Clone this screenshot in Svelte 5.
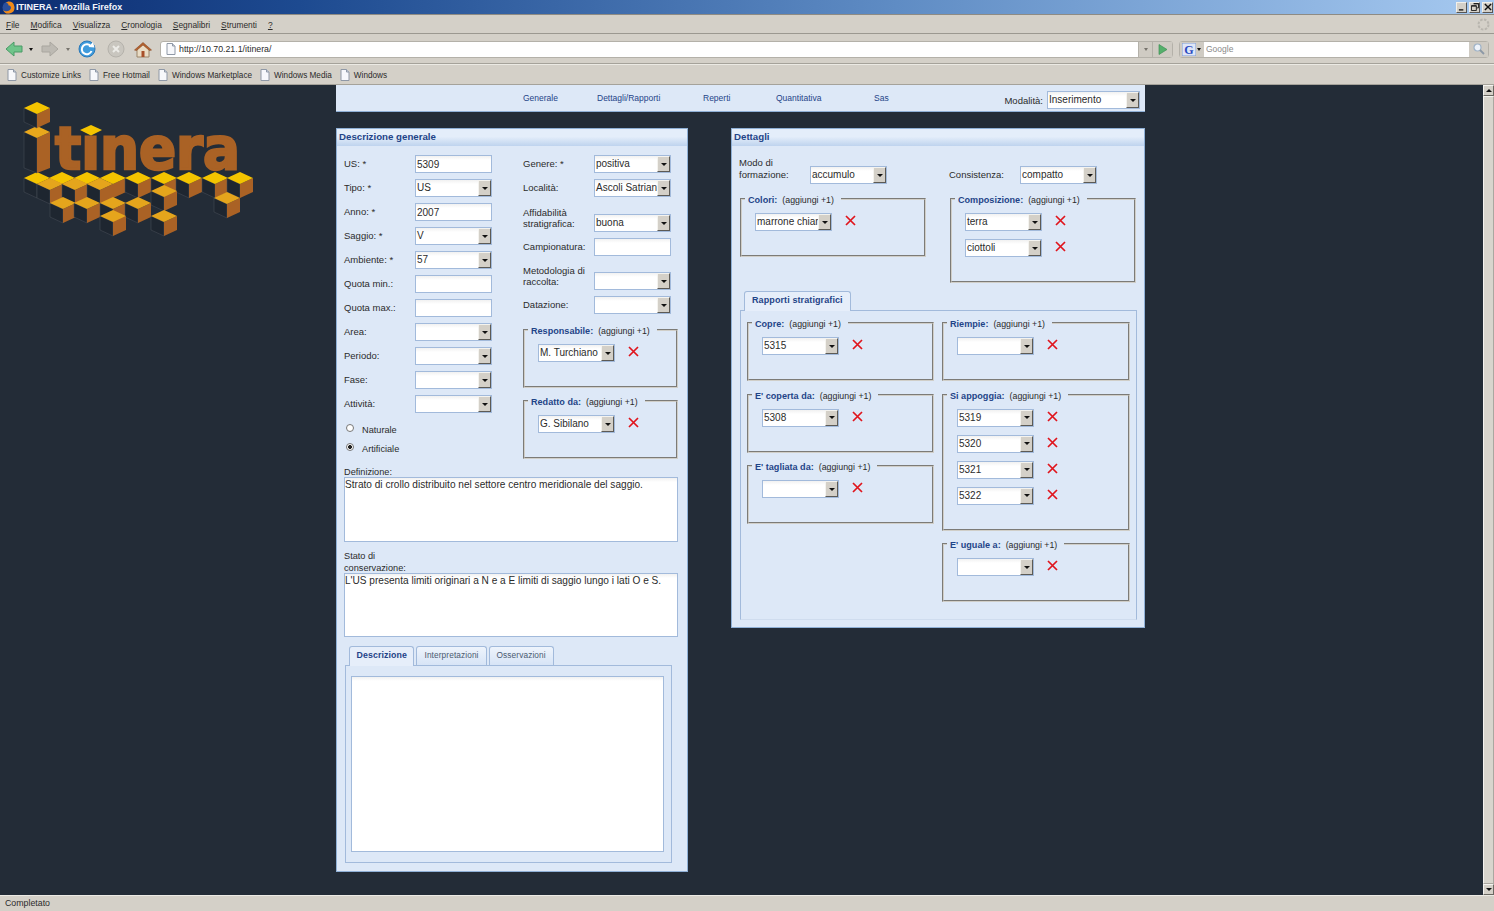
<script>
  const menu = [['F', 'ile'], ['M', 'odifica'], ['V', 'isualizza'], ['C', 'ronologia'], ['S', 'egnalibri'], ['S', 'trumenti'], ['?', '']];
  const bookmarks = ['Customize Links', 'Free Hotmail', 'Windows Marketplace', 'Windows Media', 'Windows'];
  const nav = ['Generale', 'Dettagli/Rapporti', 'Reperti', 'Quantitativa', 'Sas'];

  const leftFields = [
    { label: 'US: *', value: '5309', input: true },
    { label: 'Tipo: *', value: 'US' },
    { label: 'Anno: *', value: '2007', input: true },
    { label: 'Saggio: *', value: 'V' },
    { label: 'Ambiente: *', value: '57' },
    { label: 'Quota min.:', value: '', input: true },
    { label: 'Quota max.:', value: '', input: true },
    { label: 'Area:', value: '' },
    { label: 'Periodo:', value: '' },
    { label: 'Fase:', value: '' },
    { label: 'Attività:', value: '' }
  ];
  const rightFields = [
    { label: 'Genere: *', value: 'positiva' },
    { label: 'Località:', value: 'Ascoli Satriano' },
    { label: 'Affidabilità stratigrafica:', value: 'buona', two: true },
    { label: 'Campionatura:', value: '', input: true },
    { label: 'Metodologia di raccolta:', value: '', two: true },
    { label: 'Datazione:', value: '' }
  ];

  // top-centre of each cube of the logo, back to front
  const cubes = [
    [37, 172], [62, 172], [87, 172], [113, 172], [138, 172], [164, 172], [189, 172], [215, 172], [240, 172]
  ];
  const amberCubes = [[50, 178], [75, 178], [100, 178], [164, 185], [227, 192], [63, 197], [87, 197], [113, 197], [138, 197], [113, 210], [164, 210]];
</script>

{#snippet select(value, wide = false)}
  <div class="sel" class:wide>
    <span class="val">{value}</span>
    <span class="btn"><i></i></span>
  </div>
{/snippet}

{#snippet cross()}
  <svg class="cross" width="11" height="11" viewBox="0 0 11 11"><path d="M1 1 L10 10 M10 1 L1 10" stroke="#e0141c" stroke-width="1.7" fill="none"/></svg>
{/snippet}

{#snippet group(title, values, extra = '')}
  <fieldset class="group {extra}">
    <legend><b>{title}</b><span>(aggiungi +1)</span></legend>
    {#each values as v}
      <div class="pick">
        {@render select(v)}
        {@render cross()}
      </div>
    {/each}
  </fieldset>
{/snippet}

{#snippet page()}
  <svg width="10" height="12" viewBox="0 0 10 12"><path d="M1 .5 H6.5 L9 3 V11.5 H1 Z" fill="#f7f8fb" stroke="#8f98a6"/><path d="M6.5 .5 V3 H9" fill="#cfd6e2" stroke="#8f98a6"/></svg>
{/snippet}

<div class="window">
  <header class="title">
    <svg width="13" height="13" viewBox="0 0 13 13"><circle cx="6.5" cy="6.5" r="6" fill="#2a4f9c"/><path d="M6.5 .5 A6 6 0 1 1 1 9 C3 11 8 11 9 7 C9 5 7 4 6 4.500 C7 3 6 2 4 2 C5 1 6 .5 6.500 .5 Z" fill="#f08a18"/></svg>
    <span>ITINERA - Mozilla Firefox</span>
    <div class="winbtns">
      <span class="wb"><svg width="9" height="9" viewBox="0 0 9 9"><path d="M1 7 H6 V8.500 H1 Z" fill="#111"/></svg></span>
      <span class="wb"><svg width="9" height="9" viewBox="0 0 9 9"><path d="M3 .5 H8.500 V5.500 H6.500 M.5 3 H6 V8.500 H.5 Z M.5 3.500 H6 M3 1 H8.500" fill="none" stroke="#111"/></svg></span>
      <span class="wb"><svg width="9" height="9" viewBox="0 0 9 9"><path d="M1 1 L8 8 M8 1 L1 8" stroke="#111" stroke-width="1.600"/></svg></span>
    </div>
  </header>

  <div class="menubar">
    {#each menu as [first, rest]}
      <span><u>{first}</u>{rest}</span>
    {/each}
    <svg class="throbber" width="13" height="13" viewBox="0 0 13 13"><circle cx="6.500" cy="6.500" r="5" fill="none" stroke="#b9b6af" stroke-width="2" stroke-dasharray="2.500 1.400"/></svg>
  </div>

  <div class="toolbar">
    <svg class="tool back" width="18" height="16" viewBox="0 0 18 16"><path d="M1 8 L9 1 V5 H17 V11 H9 V15 Z" fill="#6fc48a" stroke="#4b9a66"/></svg>
    <i class="drop"></i>
    <svg class="tool fwd" width="18" height="16" viewBox="0 0 18 16"><path d="M17 8 L9 1 V5 H1 V11 H9 V15 Z" fill="#bdbab3" stroke="#a9a69f"/></svg>
    <i class="drop off"></i>
    <svg class="tool reload" width="19" height="18" viewBox="0 0 19 18"><circle cx="9" cy="9" r="8" fill="#3f9bdc" stroke="#2a78b8"/><path d="M13 6.500 A5 5 0 1 0 13.500 11" fill="none" stroke="#fff" stroke-width="2"/><path d="M10.500 7 L16.500 7.500 L15 2 Z" fill="#fff"/></svg>
    <svg class="tool stop" width="18" height="18" viewBox="0 0 18 18"><circle cx="9" cy="9" r="8" fill="#c9c6bf" stroke="#b5b2ab"/><path d="M6 6 L12 12 M12 6 L6 12" stroke="#ecebe7" stroke-width="2"/></svg>
    <svg class="tool home" width="18" height="17" viewBox="0 0 18 17"><path d="M3 8 V16 H15 V8 L9 3 Z" fill="#e9dcc5" stroke="#9b8468"/><path d="M.5 9 L9 1.500 L17.500 9 L15.500 9.500 L9 4 L2.500 9.500 Z" fill="#b4622f" stroke="#8b4a25" stroke-width=".6"/><path d="M7.500 10 H10.500 V16 H7.500 Z" fill="#a8502a"/></svg>
    <div class="url">
      {@render page()}
      <span class="addr">http://10.70.21.1/itinera/</span>
      <span class="urldrop"><i class="drop off"></i></span>
      <span class="go"><svg width="10" height="11" viewBox="0 0 10 11"><path d="M1 .5 L9 5.500 L1 10.500 Z" fill="#55b06b" stroke="#3f8f56" stroke-width=".7"/></svg></span>
    </div>
    <div class="search">
      <span class="engine">
        <svg width="14" height="13" viewBox="0 0 14 13"><rect width="14" height="13" fill="#dfe6f7" stroke="#7f9ad0"/><text x="7" y="11" text-anchor="middle" class="gee">G</text></svg>
        <i class="drop"></i>
      </span>
      <span class="q">Google</span>
      <span class="lens"><svg width="12" height="12" viewBox="0 0 12 12"><circle cx="4.500" cy="4.500" r="3.500" fill="#eef3fa" stroke="#9fb3c8" stroke-width="1.200"/><path d="M7 7 L11 11" stroke="#8c98a6" stroke-width="1.800"/></svg></span>
    </div>
  </div>

  <div class="bookmarks">
    {#each bookmarks as b}
      <span class="bm">{@render page()}{b}</span>
    {/each}
  </div>

  <div class="content">
    <main>
      <aside class="logo">
        <svg width="260" height="160" viewBox="0 90 260 160">
          <defs>
            <g id="cube">
              <path d="M-13 6 L0 12 V26 L-13 20 Z" fill="#1e2630" stroke="#4a515b" stroke-width=".5"/>
              <path d="M13 6 L0 12 V26 L13 20 Z" fill="#aa6225"/>
              <path d="M0 0 L13 6 L0 12 L-13 6 Z" fill="#f4c400"/>
            </g>
            <g id="amber">
              <path d="M-13 6 L0 12 V26 L-13 20 Z" fill="#1e2630" stroke="#4a515b" stroke-width=".5"/>
              <path d="M13 6 L0 12 V26 L13 20 Z" fill="#aa6225"/>
              <path d="M0 0 L13 6 L0 12 L-13 6 Z" fill="#e5a51c"/>
            </g>
          </defs>
          {#each cubes as [x, y]}
            <use href="#cube" {x} {y}/>
          {/each}
          {#each amberCubes as [x, y]}
            <use href="#amber" {x} {y}/>
          {/each}
          <path d="M24 132 L37 138 V173 L24 168 Z" fill="#1e2630" stroke="#4a515b" stroke-width=".5"/>
          <path d="M50 132 L37 138 V173 L50 168 Z" fill="#aa6225"/>
          <path d="M37 126 L50 132 L37 138 L24 132 Z" fill="#e9a81c"/>
          <use href="#cube" x="37" y="102"/>
          <text x="55" y="169" textLength="185" lengthAdjust="spacingAndGlyphs" class="word">tınera</text>
          <path d="M91 125 L102 130 L91 135.500 L80 130 Z" fill="#f4c400"/>
        </svg>
      </aside>

      <div class="app">
        <nav class="top">
          {#each nav as n}<a href="#top">{n}</a>{/each}
          <div class="mode"><span>Modalità:</span>{@render select('Inserimento', true)}</div>
        </nav>

        <div class="panels">
          <section class="panel left">
            <h2>Descrizione generale</h2>
            <div class="body">
              <div class="cols">
                <div class="col-a">
                  {#each leftFields as f}
                    <div class="field">
                      <label for={f.label}>{f.label}</label>
                      {#if f.input}
                        <input id={f.label} value={f.value} readonly />
                      {:else}
                        {@render select(f.value)}
                      {/if}
                    </div>
                  {/each}
                  <div class="radios">
                    <span class="radio"><i></i>Naturale</span>
                    <span class="radio"><i class="on"></i>Artificiale</span>
                  </div>
                </div>
                <div class="col-b">
                  {#each rightFields as f}
                    <div class="field" class:two={f.two}>
                      <label for={f.label}>{f.label}</label>
                      {#if f.input}
                        <input id={f.label} value={f.value} readonly />
                      {:else}
                        {@render select(f.value)}
                      {/if}
                    </div>
                  {/each}
                  {@render group('Responsabile:', ['M. Turchiano'])}
                  {@render group('Redatto da:', ['G. Sibilano'])}
                </div>
              </div>

              <label class="stack" for="def">Definizione:</label>
              <textarea id="def" readonly>Strato di crollo distribuito nel settore centro meridionale del saggio.</textarea>
              <label class="stack cons" for="cons">Stato di<br />conservazione:</label>
              <textarea id="cons" readonly>L'US presenta limiti originari a N e a E limiti di saggio lungo i lati O e S.</textarea>

              <div class="tabs">
                <span class="tab on">Descrizione</span>
                <span class="tab">Interpretazioni</span>
                <span class="tab">Osservazioni</span>
              </div>
              <div class="tabbody">
                <textarea class="big" readonly></textarea>
              </div>
            </div>
          </section>

          <section class="panel right">
            <h2>Dettagli</h2>
            <div class="body">
              <div class="headrow">
                <div class="field"><label for="modo">Modo di<br />formazione:</label>{@render select('accumulo')}</div>
                <div class="field"><label for="cons2">Consistenza:</label>{@render select('compatto')}</div>
              </div>
              <div class="pair top-pair">
                {@render group('Colori:', ['marrone chiaro'])}
                {@render group('Composizione:', ['terra', 'ciottoli'])}
              </div>
              <div class="tabs inner">
                <span class="tab on strong">Rapporti stratigrafici</span>
              </div>
              <div class="rapporti">
                <div class="rap-col">
                  {@render group('Copre:', ['5315'])}
                  {@render group("E' coperta da:", ['5308'])}
                  {@render group("E' tagliata da:", [''])}
                </div>
                <div class="rap-col">
                  {@render group('Riempie:', [''])}
                  {@render group('Si appoggia:', ['5319', '5320', '5321', '5322'])}
                  {@render group("E' uguale a:", [''])}
                </div>
              </div>
            </div>
          </section>
        </div>
      </div>
    </main>

    <div class="scrollbar">
      <span class="sb"><i class="up"></i></span>
      <span class="thumb"></span>
      <span class="sb"><i></i></span>
    </div>
  </div>

  <footer class="status">Completato</footer>
</div>

<style>
  :global(body) {
    margin: 0;
    background: #232c37;
    font-family: "Liberation Sans", Arial, sans-serif;
  }
  .window {
    height: 911px;
    width: 1494px;
    display: flex;
    flex-direction: column;
    overflow: hidden;
    font-size: 8.5px;
    color: #2b2b2b;
  }

  /* browser chrome */
  .title {
    height: 14px;
    flex: none;
    display: flex;
    align-items: center;
    gap: 1px;
    padding-left: 2px;
    background: linear-gradient(90deg, #0c2c70 0%, #1d4a90 20%, #5f8cc4 60%, #a6c9f0 100%);
    color: #f2f5fb;
    font-size: 9px;
    font-weight: bold;
  }
  .winbtns {
    margin-left: auto;
    display: flex;
    gap: 2px;
    padding-right: 1px;
  }
  .wb {
    width: 11px;
    height: 11px;
    background: #d4d0c8;
    border: 1px solid #f2f0ea;
    border-right-color: #555;
    border-bottom-color: #555;
    box-sizing: border-box;
    display: flex;
    align-items: center;
    justify-content: center;
  }
  .wb svg { width: 8px; height: 8px; }
  .menubar {
    height: 20px;
    flex: none;
    box-sizing: border-box;
    display: flex;
    align-items: center;
    gap: 11px;
    padding: 1px 0 0 6px;
    background: #d4d0c8;
    border-top: 1px solid #8e8b84;
    border-bottom: 1px solid #9b9890;
    font-size: 8.4px;
  }
  .throbber { margin-left: auto; margin-right: 4px; }
  .toolbar {
    height: 30px;
    flex: none;
    display: flex;
    align-items: center;
    background: #d4d0c8;
    border-bottom: 1px solid #a5a29a;
    padding: 1px 0 0 5px;
    box-sizing: border-box;
  }
  .tool { flex: none; }
  .drop {
    display: inline-block;
    width: 0;
    height: 0;
    border: 2.500px solid transparent;
    border-top: 3px solid #111;
    border-bottom: 0;
  }
  .drop.off { border-top-color: #77746d; }
  .toolbar > .drop { margin: 1px 8px 0 6px; }
  .toolbar > .drop.off { margin: 1px 8px 0 7px; }
  .stop { margin-left: 10px; }
  .home { margin-left: 9px; margin-right: 8px; }
  .url {
    width: 1013px;
    height: 17px;
    box-sizing: border-box;
    display: flex;
    align-items: center;
    background: #fff;
    border: 1px solid #b4b1a9;
    border-radius: 3px;
    padding-left: 5px;
    font-size: 8.8px;
  }
  .addr { margin-left: 3px; flex: 1; }
  .urldrop, .go {
    height: 100%;
    background: #cfcbc3;
    display: flex;
    align-items: center;
    justify-content: center;
    border-left: 1px solid #b4b1a9;
  }
  .urldrop { width: 13px; }
  .go { width: 19px; }
  .search {
    width: 310px;
    height: 17px;
    margin-left: 6px;
    box-sizing: border-box;
    display: flex;
    align-items: center;
    background: #fff;
    border: 1px solid #b4b1a9;
    border-radius: 3px;
  }
  .engine {
    width: 24px;
    height: 100%;
    background: #cfcbc3;
    display: flex;
    align-items: center;
    gap: 1px;
    padding-left: 2px;
    box-sizing: border-box;
  }
  .gee { font: bold 12px "Liberation Serif", serif; fill: #2a4ac0; }
  .q { flex: 1; color: #8a8a8a; padding-left: 2px; }
  .lens {
    width: 19px;
    height: 100%;
    background: #cfcbc3;
    display: flex;
    align-items: center;
    justify-content: center;
  }
  .bookmarks {
    height: 21px;
    flex: none;
    display: flex;
    align-items: center;
    gap: 8px;
    padding: 1px 0 0 7px;
    background: #d4d0c8;
    border-top: 1px solid #eceae4;
    border-bottom: 1px solid #a5a29a;
    box-sizing: border-box;
    font-size: 8.200px;
  }
  .bm { display: flex; align-items: center; gap: 4px; }

  .content {
    flex: 1;
    display: flex;
    min-height: 0;
  }
  main {
    flex: 1;
    display: flex;
    min-width: 0;
    background: #232c37;
  }
  .logo {
    width: 336px;
    flex: none;
  }
  .logo svg { display: block; margin-top: 5px; }
  .word {
    font: bold 58px "DejaVu Sans", sans-serif;
    fill: #aa6225;
    stroke: #aa6225;
    stroke-width: 2.500px;
  }

  .top {
    width: 809px;
    height: 27px;
    box-sizing: border-box;
    display: grid;
    grid-template-columns: 74px 106px 73px 98px 1fr;
    align-items: center;
    padding-left: 187px;
    padding-bottom: 1px;
    background: #dde8f7;
    border-bottom: 1px solid #8fb0d6;
    position: relative;
  }
  .top a {
    color: #1f4488;
    text-decoration: none;
  }
  .mode {
    position: absolute;
    right: 5px;
    top: 6px;
    display: flex;
    align-items: center;
    gap: 4px;
    font-size: 9.500px;
  }

  .panels {
    display: flex;
    align-items: flex-start;
    gap: 43px;
    margin-top: 16px;
  }
  .panel {
    background: #dde8f7;
    box-sizing: border-box;
    border: 1px solid #8fb0d6;
  }
  .panel.left { width: 352px; height: 744px; }
  .panel.right { width: 414px; height: 500px; }
  h2 {
    margin: 0;
    height: 17px;
    box-sizing: border-box;
    padding: 2px 2px 0;
    font-size: 9.700px;
    line-height: 11px;
    color: #1f4488;
    background: linear-gradient(#e4eefa, #e4eefa 45%, #bed3ee);
    font-weight: bold;
  }
  .left .body { padding: 9px 9px 0 7px; }
  .cols {
    display: grid;
    grid-template-columns: 148px 155px;
    column-gap: 31px;
  }
  .col-a, .col-b {
    display: flex;
    flex-direction: column;
    gap: 6px;
  }
  .field {
    display: flex;
    align-items: center;
    font-size: 9.500px;
  }
  .col-a .field label { width: 71px; flex: none; padding-bottom: 1px; }
  .col-b .field { min-height: 18px; }
  .col-b .field label { width: 71px; flex: none; line-height: 11px; padding-bottom: 1px; }
  .col-b .field.two { height: 29px; align-items: flex-end; }
  .col-b .field.two label { padding-bottom: 3px; }
  .col-b .field.two:nth-of-type(5) { height: 28px; }

  input, textarea {
    box-sizing: border-box;
    border: 1px solid #a2badb;
    background: linear-gradient(#f1f1f1, #fff 4px);
    font-family: inherit;
    color: #2b2b2b;
    outline: none;
  }
  input {
    width: 77px;
    height: 18px;
    font-size: 10px;
    padding: 0 1px;
    border-radius: 0;
  }
  textarea {
    display: block;
    resize: none;
    width: 334px;
    padding: 1px 0 0;
    font-size: 10.100px;
    line-height: 12px;
    overflow: hidden;
  }
  #def { height: 65px; }
  #cons { height: 64px; }
  .sel {
    width: 77px;
    height: 18px;
    flex: none;
    box-sizing: border-box;
    display: flex;
    border: 1px solid #a2badb;
    background: linear-gradient(#f1f1f1, #fff 4px);
    font-size: 10px;
    color: #2b2b2b;
  }
  .sel.wide { width: 93px; }
  .val {
    flex: 1;
    min-width: 0;
    padding-left: 1px;
    line-height: 16px;
    overflow: hidden;
    white-space: nowrap;
  }
  .btn {
    width: 13px;
    flex: none;
    background: #d4d0c8;
    border: 1px solid #f4f3ef;
    border-right-color: #5c5a55;
    border-bottom-color: #5c5a55;
    box-sizing: border-box;
    display: flex;
    align-items: center;
    justify-content: center;
  }
  .btn i {
    width: 0;
    height: 0;
    border: 3.500px solid transparent;
    border-top: 3.500px solid #111;
    border-bottom: 0;
  }
  .radios {
    display: flex;
    flex-direction: column;
    gap: 7px;
    margin-top: 4px;
    padding-left: 2px;
  }
  .radio {
    display: flex;
    align-items: flex-start;
    height: 12px;
    font-size: 9.200px;
    line-height: 14px;
  }
  .radio i {
    width: 8px;
    height: 8px;
    margin-right: 8px;
    box-sizing: border-box;
    border-radius: 50%;
    border: 1px solid #777;
    background: #fff;
    margin-top: 1px;
  }
  .radio i.on { background: radial-gradient(circle, #222 0 1.800px, #fff 2.200px); }

  fieldset.group {
    margin: 0;
    padding: 9px 13px 24px;
    min-inline-size: 0;
    border: 2px groove #d0cec8;
    box-sizing: border-box;
    display: flex;
    flex-direction: column;
    gap: 8px;
  }
  legend {
    margin-left: -10px;
    padding: 0 7px 0 3px;
    font-size: 8.800px;
    line-height: 10px;
    white-space: nowrap;
  }
  legend b, legend span { position: relative; top: 1px; }
  legend b { color: #1f4488; margin-right: 5px; font-size: 9.100px; }
  .pick {
    display: flex;
    align-items: flex-start;
    gap: 13px;
  }
  .cross { margin-top: 2px; flex: none; }
  .col-b fieldset.group { margin-top: 5px; }
  .col-b fieldset.group + fieldset.group { margin-top: 2px; }

  .stack {
    display: block;
    font-size: 9.200px;
    line-height: 11px;
    margin: 8px 0 -1px;
  }
  .stack.cons { margin: 8px 0 -1px; line-height: 12px; }
  .tabs {
    display: flex;
    gap: 2px;
    margin-top: 9px;
    padding-left: 5px;
    height: 19px;
  }
  .tab {
    box-sizing: border-box;
    padding: 0 7px;
    height: 19px;
    line-height: 17px;
    border: 1px solid #a2badb;
    border-bottom: 0;
    border-radius: 3px 3px 0 0;
    background: linear-gradient(#eef4fc, #d7e4f6);
    font-size: 8.300px;
    color: #4a5a70;
    letter-spacing: .1px;
  }
  .tab.on {
    background: #e6eefa;
    color: #1f4488;
    font-weight: bold;
    font-size: 8.800px;
    padding: 0 6.500px;
    height: 20px;
    position: relative;
    z-index: 1;
  }
  .tabbody {
    width: 327px;
    height: 198px;
    box-sizing: border-box;
    margin-left: 1px;
    padding: 10px 5px;
    border: 1px solid #a2badb;
    background: #dde8f7;
  }
  .big {
    width: 313px;
    height: 176px;
  }

  .right .body { padding: 13px 8px 0 8px; }
  .headrow {
    display: flex;
    height: 25px;
    margin-left: -1px;
    align-items: flex-end;
    gap: 62px;
  }
  .headrow .field { align-items: flex-end; line-height: 12px; }
  .headrow label { width: 71px; flex: none; padding-bottom: 3px; }
  .pair {
    display: grid;
    grid-template-columns: 186px 186px;
    column-gap: 24px;
    align-items: start;
    margin-top: 10px;
  }
  .tabs.inner { margin-top: 8px; padding-left: 4px; }
  .tab.on.strong { font-size: 9px; padding: 0 7px; }
  .rapporti {
    width: 397px;
    height: 310px;
    box-sizing: border-box;
    padding: 7px 6px 0;
    display: grid;
    grid-template-columns: 187px 188px;
    column-gap: 8px;
    border: 1px solid #a2badb;
    border-bottom-color: #cfdcee;
  }
  .rap-col {
    display: flex;
    flex-direction: column;
    gap: 8.500px;
  }

  .scrollbar {
    width: 11px;
    flex: none;
    display: flex;
    flex-direction: column;
    background: #ece9e0;
  }
  .sb {
    height: 11px;
    flex: none;
    background: #d4d0c8;
    border: 1px solid #f4f3ef;
    border-right-color: #6a6862;
    border-bottom-color: #6a6862;
    box-sizing: border-box;
    display: flex;
    align-items: center;
    justify-content: center;
  }
  .sb i {
    width: 0;
    height: 0;
    border: 3px solid transparent;
    border-top: 3px solid #111;
    border-bottom: 0;
  }
  .sb i.up {
    border-top: 0;
    border-bottom: 3px solid #111;
  }
  .thumb {
    flex: 1;
    background: #d8d5cd;
    border: 1px solid #f4f3ef;
    border-right-color: #aaa7a0;
    border-bottom-color: #aaa7a0;
  }
  .status {
    height: 16px;
    flex: none;
    box-sizing: border-box;
    padding: 2px 5px 0;
    background: #d4d0c8;
    border-top: 1px solid #eceae4;
    font-size: 8.800px;
  }
</style>
